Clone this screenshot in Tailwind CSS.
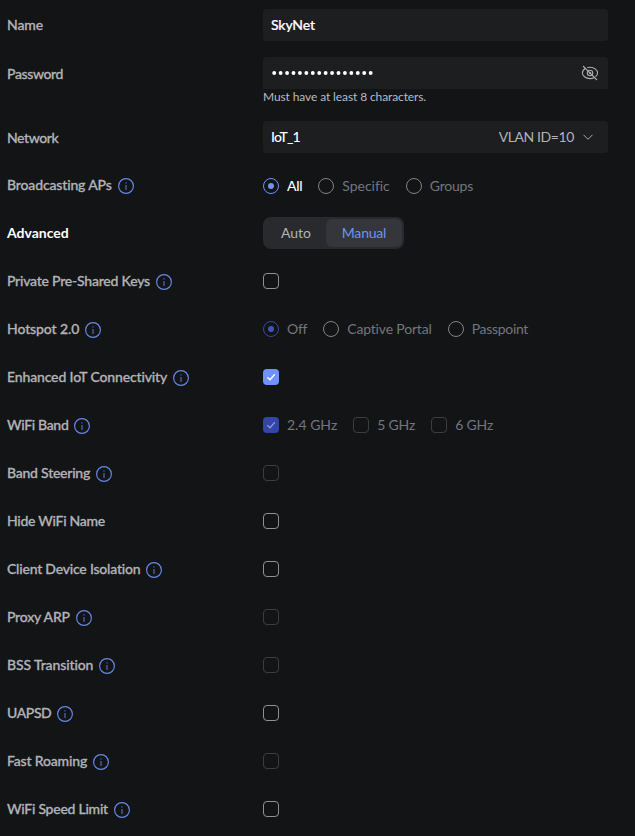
<!DOCTYPE html>
<html lang="en">
<head>
<meta charset="utf-8">
<title>WiFi settings</title>
<script src="https://cdn.jsdelivr.net/npm/@tailwindcss/browser@4"></script>
</head>
<body class="bg-[#131416] font-['Lato',sans-serif] text-[14px] leading-5 text-[#b2b3b6] w-[635px] h-[836px] overflow-hidden [font-variant-ligatures:none]">
<svg class="hidden">
  <symbol id="info" viewBox="0 0 16 16"><circle cx="8" cy="8" r="7.4" fill="none" stroke="#6789e8" stroke-width="1.15"/><path d="M8 7v5M8 4.3v1.3" stroke="#5872c4" stroke-width="1.1" fill="none"/></symbol>
  <symbol id="check" viewBox="0 0 16 16"><path d="M4.3 8.2 7 10.7 11.8 5.3" fill="none" stroke="currentColor" stroke-width="1.3"/></symbol>
</svg>
<form class="pl-[7px] pr-[27px] pt-px">
  <div class="flex h-12 items-center"><div class="w-64 font-medium [-webkit-text-stroke:0.3px] tracking-[-0.1px]">Name</div><div class="flex h-8 flex-1 items-center rounded bg-[#1c1e20] px-2 font-medium [-webkit-text-stroke:0.2px] tracking-[-0.15px] text-white">SkyNet</div></div>
  <div class="flex h-16 items-start pt-2">
    <div class="w-64 pt-[7px] font-medium [-webkit-text-stroke:0.3px] tracking-[-0.37px]">Password</div>
    <div class="flex-1">
      <div class="flex h-8 items-center justify-between rounded-t bg-[#1c1e20] pl-2 pr-[9px]">
        <svg class="h-4 w-[105px]" viewBox="0 0 105 16"><path d="M3.2 8H102" stroke="#fff" stroke-width="3.9" stroke-linecap="round" stroke-dasharray="0 6.43"/></svg>
        <svg class="h-[18px] w-[18px]" viewBox="0 0 18 18" fill="none" stroke="#a9abae" stroke-width="1.1"><path d="M4.6 4.2C2.4 5.5 1.4 7.5 1.4 9c0 2.6 3.1 5.6 7.6 5.6 1.8 0 3.3-.5 4.5-1.2M6.4 3.6C7.2 3.4 8 3.3 9 3.3c4.5 0 7.6 3 7.6 5.7 0 1.3-.7 2.7-2.1 3.8"/><circle cx="9" cy="9" r="2.7"/><circle cx="9" cy="9" r=".6"/><path d="M2 2l14 14"/></svg>
      </div>
      <div class="text-[12px] leading-4 tracking-[-0.11px] text-[#b9bac6]">Must have at least 8 characters.</div>
    </div>
  </div>
  <div class="flex h-12 items-center"><div class="w-64 pt-0.5 font-medium [-webkit-text-stroke:0.3px] tracking-[-0.42px]">Network</div><div class="flex h-8 flex-1 items-center rounded bg-[#1c1e20] pl-2 pr-[14px]"><span class="flex-1 font-medium tracking-[-0.8px] text-white">IoT_1</span><span class="tracking-[-0.4px]">VLAN ID=10</span><svg class="ml-2 h-3 w-3" viewBox="0 0 12 12"><path d="M1.5 3.8 6 8.3l4.5-4.5" fill="none" stroke="#a9abae"/></svg></div></div>
  <div class="flex h-12 items-center pt-0.5"><div class="flex w-64 items-center gap-1.5 font-medium [-webkit-text-stroke:0.3px] tracking-[-0.15px]"><span class="-mt-0.5">Broadcasting APs</span><svg class="size-4"><use href="#info"/></svg></div>
    <div class="flex items-center gap-4 text-[#73767f]">
      <label class="flex items-center gap-2 font-medium tracking-[-0.3px] text-white"><span class="flex size-4 items-center justify-center rounded-full border border-[#6f92f6]"><span class="size-1.5 rounded-full bg-[#6f92f6]"></span></span>All</label>
      <label class="flex items-center gap-2 tracking-[-0.03px]"><span class="size-4 rounded-full border border-[#808386]"></span>Specific</label>
      <label class="flex items-center gap-2 tracking-[-0.2px]"><span class="size-4 rounded-full border border-[#808386]"></span>Groups</label>
    </div></div>
  <div class="flex h-12 items-center"><div class="w-64 font-bold text-white">Advanced</div>
    <div class="flex h-8 w-[141px] rounded-lg bg-[#282a2d] p-0.5"><div class="flex w-[61px] items-center justify-center pl-px">Auto</div><div class="flex flex-1 items-center justify-center rounded-md bg-[#34363c] tracking-[-0.2px] text-[#6f92f6]">Manual</div></div></div>
  <div class="flex h-12 items-center"><div class="flex w-64 items-center gap-1.5 font-medium [-webkit-text-stroke:0.3px] tracking-[-0.22px]">Private Pre-Shared Keys<svg class="mt-0.5 size-4"><use href="#info"/></svg></div><span class="size-4 rounded border border-[#8e9092]"></span></div>
  <div class="flex h-12 items-center"><div class="flex w-64 items-center gap-1.5 font-medium [-webkit-text-stroke:0.3px] tracking-[-0.1px]">Hotspot 2.0<svg class="mt-0.5 size-4"><use href="#info"/></svg></div>
    <div class="flex items-center gap-4 text-[#73767f]">
      <label class="flex items-center gap-2 tracking-[-0.25px]"><span class="flex size-4 items-center justify-center rounded-full border border-[#37479f]"><span class="size-1.5 rounded-full bg-[#4054bc]"></span></span>Off</label>
      <label class="flex items-center gap-2 tracking-[-0.17px]"><span class="size-4 rounded-full border border-[#808386]"></span>Captive Portal</label>
      <label class="flex items-center gap-2 tracking-[-0.3px]"><span class="size-4 rounded-full border border-[#808386]"></span>Passpoint</label>
    </div></div>
  <div class="flex h-12 items-center"><div class="flex w-64 items-center gap-1.5 font-medium [-webkit-text-stroke:0.3px] tracking-[-0.14px]">Enhanced IoT Connectivity<svg class="mt-0.5 size-4"><use href="#info"/></svg></div><svg class="size-4 rounded bg-[#6f92ff] text-white"><use href="#check"/></svg></div>
  <div class="flex h-12 items-center"><div class="flex w-64 items-center gap-1.5 font-medium [-webkit-text-stroke:0.3px] tracking-[-0.32px]">WiFi Band<svg class="mt-0.5 size-4"><use href="#info"/></svg></div>
    <div class="flex items-center gap-4 text-[#73767f]">
      <label class="flex items-center gap-2"><svg class="size-4 rounded bg-[#3346a6] text-[#8d9ad0]"><use href="#check"/></svg>2.4 GHz</label>
      <label class="flex items-center gap-2 tracking-[-0.18px]"><span class="size-4 rounded border border-[#3b3d3f]"></span>5 GHz</label>
      <label class="flex items-center gap-2 tracking-[-0.15px]"><span class="size-4 rounded border border-[#3b3d3f]"></span>6 GHz</label>
    </div></div>
  <div class="flex h-12 items-center"><div class="flex w-64 items-center gap-1.5 font-medium [-webkit-text-stroke:0.3px] tracking-[-0.23px]">Band Steering<svg class="mt-0.5 size-4"><use href="#info"/></svg></div><span class="size-4 rounded border border-[#3b3d3f]"></span></div>
  <div class="flex h-12 items-center"><div class="w-64 font-medium [-webkit-text-stroke:0.3px] tracking-[-0.28px]">Hide WiFi Name</div><span class="size-4 rounded border border-[#8e9092]"></span></div>
  <div class="flex h-12 items-center"><div class="flex w-64 items-center gap-1.5 font-medium [-webkit-text-stroke:0.3px] tracking-[-0.21px]">Client Device Isolation<svg class="mt-0.5 size-4"><use href="#info"/></svg></div><span class="size-4 rounded border border-[#8e9092]"></span></div>
  <div class="flex h-12 items-center"><div class="flex w-64 items-center gap-1.5 font-medium [-webkit-text-stroke:0.3px] tracking-[-0.22px]">Proxy ARP<svg class="mt-0.5 size-4"><use href="#info"/></svg></div><span class="size-4 rounded border border-[#3b3d3f]"></span></div>
  <div class="flex h-12 items-center"><div class="flex w-64 items-center gap-1.5 font-medium [-webkit-text-stroke:0.3px] tracking-[-0.11px]">BSS Transition<svg class="mt-0.5 size-4"><use href="#info"/></svg></div><span class="size-4 rounded border border-[#3b3d3f]"></span></div>
  <div class="flex h-12 items-center"><div class="flex w-64 items-center gap-1.5 font-medium [-webkit-text-stroke:0.3px] tracking-[-0.4px]">UAPSD<svg class="mt-0.5 size-4"><use href="#info"/></svg></div><span class="size-4 rounded border border-[#8e9092]"></span></div>
  <div class="flex h-12 items-center"><div class="flex w-64 items-center gap-1.5 font-medium [-webkit-text-stroke:0.3px] tracking-[-0.17px]">Fast Roaming<svg class="mt-0.5 size-4"><use href="#info"/></svg></div><span class="size-4 rounded border border-[#3b3d3f]"></span></div>
  <div class="flex h-12 items-center"><div class="flex w-64 items-center gap-1.5 font-medium [-webkit-text-stroke:0.3px] tracking-[-0.25px]">WiFi Speed Limit<svg class="mt-0.5 size-4"><use href="#info"/></svg></div><span class="size-4 rounded border border-[#8e9092]"></span></div>
</form>
</body>
</html>
